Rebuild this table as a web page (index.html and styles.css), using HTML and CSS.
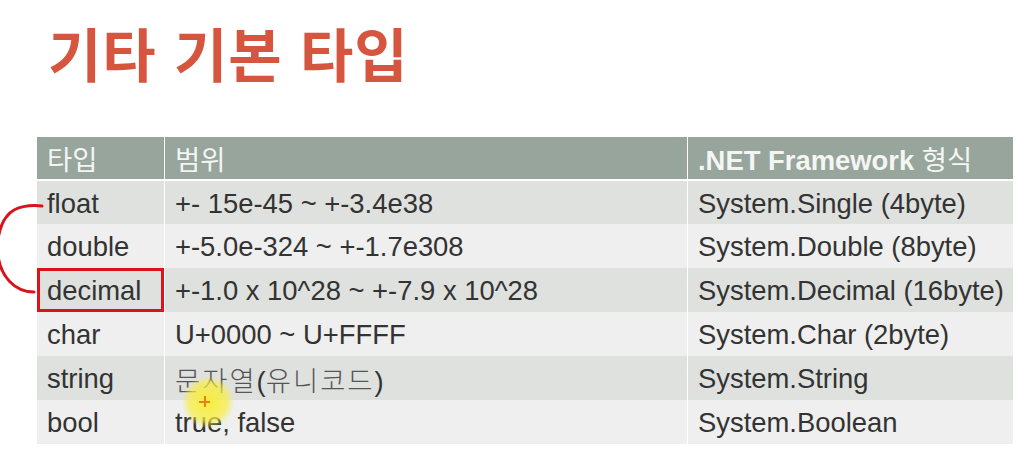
FILE: index.html
```html
<!DOCTYPE html>
<html lang="ko">
<head>
<meta charset="utf-8">
<link rel="stylesheet" href="styles.css">
</head>
<body>
<div class="slide">
  <h1 class="title">기타 기본 타입</h1>
  <table class="types">
    <thead>
      <tr><th class="c1">타입</th><th class="c2">범위</th><th class="c3"><b>.NET Framework</b> 형식</th></tr>
    </thead>
    <tbody>
      <tr class="odd"><td>float</td><td>+- 15e-45 ~ +-3.4e38</td><td>System.Single (4byte)</td></tr>
      <tr class="even"><td>double</td><td>+-5.0e-324 ~ +-1.7e308</td><td>System.Double (8byte)</td></tr>
      <tr class="odd"><td class="boxed">decimal</td><td>+-1.0 x 10^28 ~ +-7.9 x 10^28</td><td>System.Decimal (16byte)</td></tr>
      <tr class="even"><td>char</td><td>U+0000 ~ U+FFFF</td><td>System.Char (2byte)</td></tr>
      <tr class="odd"><td>string</td><td><span class="ko">문자열</span>(<span class="ko">유니코드</span>)</td><td>System.String</td></tr>
      <tr class="even"><td>bool</td><td>true, false</td><td>System.Boolean</td></tr>
    </tbody>
  </table>
  <svg class="annot" width="60" height="320" viewBox="0 0 60 320">
    <path d="M42 206 C32 205 22 206 14 210 C0 218 -4 240 -2 256 C1 276 14 292 34 292" fill="none" stroke="#d9141c" stroke-width="3" stroke-linecap="round"/>
  </svg>
  <div class="cursor"><span class="plus"></span></div>
</div>
</body>
</html>
```
FILE: styles.css
```css
html, body {
  margin: 0;
  padding: 0;
  background: #ffffff;
}
.slide {
  position: relative;
  width: 1033px;
  height: 458px;
  overflow: hidden;
  font-family: "Liberation Sans", Arial, "Noto Sans CJK KR", sans-serif;
}
.title {
  margin: 0;
  padding: 12px 0 0 48px;
  height: 123px;
  box-sizing: border-box;
  font-family: "Noto Sans CJK KR", sans-serif;
  font-weight: 700;
  font-size: 58px;
  line-height: 80px;
  color: #d6553f;
  letter-spacing: 1px;
}
.types {
  margin-left: 37px;
  margin-top: 14px;
  border-collapse: collapse;
  width: 976px;
  table-layout: fixed;
  font-size: 27.4px;
  color: #333333;
}
.types th, .types td {
  padding: 0 0 0 10px;
  text-align: left;
  border-right: 1px solid #ffffff;
  white-space: nowrap;
}
.types th:last-child, .types td:last-child { border-right: none; }
.c1 { width: 117px; }
.c2 { width: 512px; }
.types th {
  background: #97a59c;
  color: #f4f6f4;
  font-weight: 400;
  height: 42px;
  border-bottom: 2px solid #ffffff;
  font-family: "Liberation Sans", Arial, "Noto Sans CJK KR", sans-serif;
}
.types th b { font-weight: 700; }
.types td { height: 44px; padding-top: 2px; box-sizing: border-box; }
.odd td { background: #dfe1df; }
.even td { background: #eeefee; }
.ko { color: #555; font-family: "Noto Sans CJK KR", sans-serif; font-weight: 300; letter-spacing: 2px; }
.boxed { box-shadow: inset 0 0 0 3px #d9141c; }
.annot {
  position: absolute;
  left: 0;
  top: 0;
}
.cursor {
  position: absolute;
  left: 182px;
  top: 376px;
  width: 52px;
  height: 52px;
  border-radius: 50%;
  background: radial-gradient(circle, rgba(250,238,40,0.9) 0%, rgba(250,238,60,0.7) 50%, rgba(255,245,120,0) 72%);
}
.plus {
  position: absolute;
  left: 17px;
  top: 20px;
  width: 11px;
  height: 11px;
  background:
    linear-gradient(#e8801c, #e8801c) center / 11px 2px no-repeat,
    linear-gradient(#e8801c, #e8801c) center / 2px 11px no-repeat;
}
```
